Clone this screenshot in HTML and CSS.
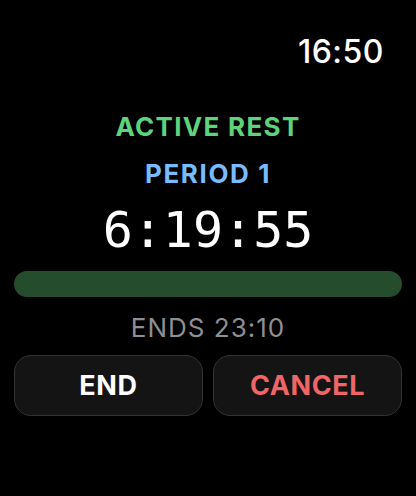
FILE: index.html
```html
<!DOCTYPE html>
<html lang="en">
<head>
    <meta charset="UTF-8">
    <meta name="viewport" content="width=device-width, initial-scale=1.0">
    <title>Active Rest</title>
    <link rel="stylesheet" href="styles.css">
</head>
<body>
    <div class="screen">
        <div class="status">
            <span class="clock">16:50</span>
        </div>

        <div class="session">
            <div class="mode">ACTIVE REST</div>
            <div class="period">PERIOD 1</div>
            <div class="timer">6:19:55</div>
        </div>

        <div class="progress">
            <div class="progress-fill"></div>
        </div>

        <div class="ends">ENDS 23:10</div>

        <div class="actions">
            <button class="btn btn-end">END</button>
            <button class="btn btn-cancel">CANCEL</button>
        </div>
    </div>
</body>
</html>
```

FILE: styles.css
```css
body {
    margin: 0;
    background-color: #000;
    color: #fff;
    font-family: Inter, "Noto Sans", sans-serif;
}

.screen {
    width: 416px;
    height: 496px;
    padding: 0 14px;
    box-sizing: border-box;
}

.status {
    display: flex;
    justify-content: flex-end;
    padding: 34px 18px 0 0;
    height: 39px;
}

.clock {
    font-size: 32px;
    font-weight: 500;
    letter-spacing: 0.5px;
    line-height: 36px;
}

.session {
    display: flex;
    flex-direction: column;
    align-items: center;
    margin-top: 38px;
}

.mode {
    color: #5fd37b;
    font-size: 26px;
    font-weight: 700;
    letter-spacing: 1.3px;
    line-height: 32px;
}

.period {
    color: #78bcff;
    font-size: 26px;
    font-weight: 700;
    letter-spacing: 1.6px;
    line-height: 32px;
    margin-top: 15px;
}

.timer {
    font-family: "DejaVu Sans Mono", monospace;
    font-size: 50px;
    line-height: 60px;
    margin-top: 10px;
}

.progress {
    height: 26px;
    margin-top: 11px;
    border-radius: 13px;
    background-color: #254c2d;
}

.ends {
    text-align: center;
    color: #8e8e93;
    font-size: 26px;
    letter-spacing: 1px;
    line-height: 30px;
    margin-top: 16px;
}

.actions {
    display: grid;
    grid-template-columns: 1fr 1fr;
    gap: 10px;
    margin-top: 12px;
}

.btn {
    height: 61px;
    background-color: #141414;
    border: 1.5px solid #333;
    border-radius: 17px;
    font-family: Inter, "Noto Sans", sans-serif;
    font-size: 27px;
    font-weight: 700;
    letter-spacing: 0.6px;
    cursor: pointer;
}

.btn-end {
    color: #fff;
}

.btn-cancel {
    color: #f06565;
}
```
